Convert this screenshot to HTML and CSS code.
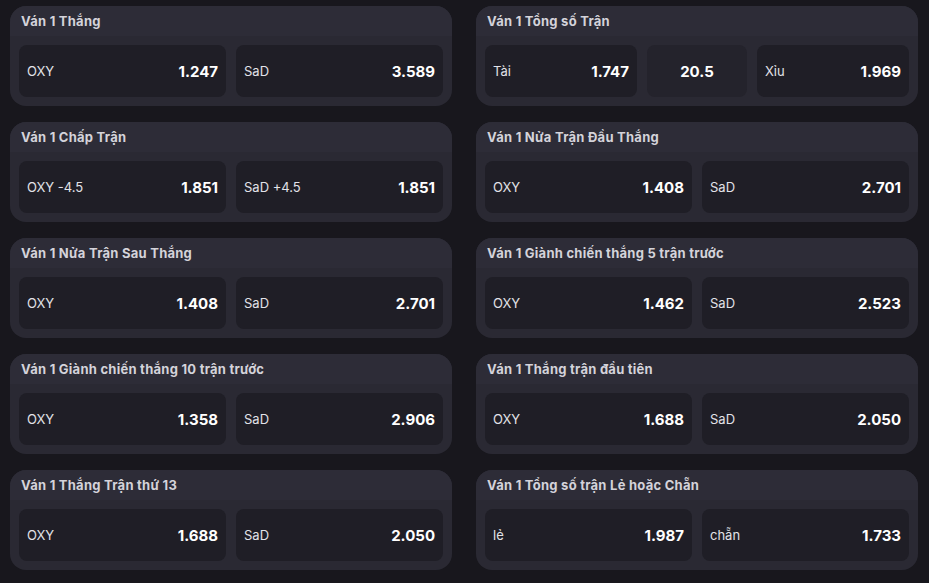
FILE: index.html
```html
<!DOCTYPE html>
<html lang="vi">
<head>
    <meta charset="UTF-8">
    <meta name="viewport" content="width=device-width, initial-scale=1.0">
    <title>Kèo Ván 1</title>
    <link rel="stylesheet" href="styles.css">
</head>
<body>
    <div class="markets">
        <div class="market">
            <div class="market-title">Ván 1 Thắng</div>
            <div class="odds">
                <div class="odd"><span class="label">OXY</span><span class="price">1.247</span></div>
                <div class="odd"><span class="label">SaD</span><span class="price">3.589</span></div>
            </div>
        </div>
        <div class="market">
            <div class="market-title">Ván 1 Tổng số Trận</div>
            <div class="odds three">
                <div class="odd"><span class="label">Tài</span><span class="price">1.747</span></div>
                <div class="odd line"><span class="price">20.5</span></div>
                <div class="odd"><span class="label">Xỉu</span><span class="price">1.969</span></div>
            </div>
        </div>
        <div class="market">
            <div class="market-title">Ván 1 Chấp Trận</div>
            <div class="odds">
                <div class="odd"><span class="label">OXY -4.5</span><span class="price">1.851</span></div>
                <div class="odd"><span class="label">SaD +4.5</span><span class="price">1.851</span></div>
            </div>
        </div>
        <div class="market">
            <div class="market-title">Ván 1 Nửa Trận Đầu Thắng</div>
            <div class="odds">
                <div class="odd"><span class="label">OXY</span><span class="price">1.408</span></div>
                <div class="odd"><span class="label">SaD</span><span class="price">2.701</span></div>
            </div>
        </div>
        <div class="market">
            <div class="market-title">Ván 1 Nửa Trận Sau Thắng</div>
            <div class="odds">
                <div class="odd"><span class="label">OXY</span><span class="price">1.408</span></div>
                <div class="odd"><span class="label">SaD</span><span class="price">2.701</span></div>
            </div>
        </div>
        <div class="market">
            <div class="market-title">Ván 1 Giành chiến thắng 5 trận trước</div>
            <div class="odds">
                <div class="odd"><span class="label">OXY</span><span class="price">1.462</span></div>
                <div class="odd"><span class="label">SaD</span><span class="price">2.523</span></div>
            </div>
        </div>
        <div class="market">
            <div class="market-title">Ván 1 Giành chiến thắng 10 trận trước</div>
            <div class="odds">
                <div class="odd"><span class="label">OXY</span><span class="price">1.358</span></div>
                <div class="odd"><span class="label">SaD</span><span class="price">2.906</span></div>
            </div>
        </div>
        <div class="market">
            <div class="market-title">Ván 1 Thắng trận đầu tiên</div>
            <div class="odds">
                <div class="odd"><span class="label">OXY</span><span class="price">1.688</span></div>
                <div class="odd"><span class="label">SaD</span><span class="price">2.050</span></div>
            </div>
        </div>
        <div class="market">
            <div class="market-title">Ván 1 Thắng Trận thứ 13</div>
            <div class="odds">
                <div class="odd"><span class="label">OXY</span><span class="price">1.688</span></div>
                <div class="odd"><span class="label">SaD</span><span class="price">2.050</span></div>
            </div>
        </div>
        <div class="market">
            <div class="market-title">Ván 1 Tổng số trận Lẻ hoặc Chẵn</div>
            <div class="odds">
                <div class="odd"><span class="label">lẻ</span><span class="price">1.987</span></div>
                <div class="odd"><span class="label">chẵn</span><span class="price">1.733</span></div>
            </div>
        </div>
    </div>
</body>
</html>
```

FILE: styles.css
```css
body {
    margin: 0;
    background-color: #18171d;
    font-family: Inter, "Noto Sans", sans-serif;
    color: #e6e6ea;
}
.markets {
    display: grid;
    grid-template-columns: 442px 442px;
    column-gap: 24px;
    row-gap: 16px;
    padding: 6px 10px;
}
.market {
    background-color: #2a2933;
    border-radius: 16px;
    overflow: hidden;
    height: 100px;
}
.market-title {
    height: 30px;
    line-height: 31px;
    padding: 0 11px;
    background-color: #2d2c37;
    font-size: 13px;
    font-weight: 700;
    letter-spacing: 0.25px;
    color: #d4d3da;
}
.odds {
    display: grid;
    grid-template-columns: 1fr 1fr;
    gap: 10px;
    padding: 9px;
}
.odds.three {
    grid-template-columns: 1fr 100px 1fr;
}
.odd {
    height: 52px;
    display: flex;
    align-items: center;
    justify-content: space-between;
    padding: 0 8px;
    background-color: #1f1e26;
    border-radius: 8px;
}
.odd.line {
    justify-content: center;
    background-color: #24232c;
}
.label {
    font-size: 13px;
    color: #e2e2e8;
}
.price {
    font-size: 15px;
    font-weight: 700;
    color: #ffffff;
}
```
